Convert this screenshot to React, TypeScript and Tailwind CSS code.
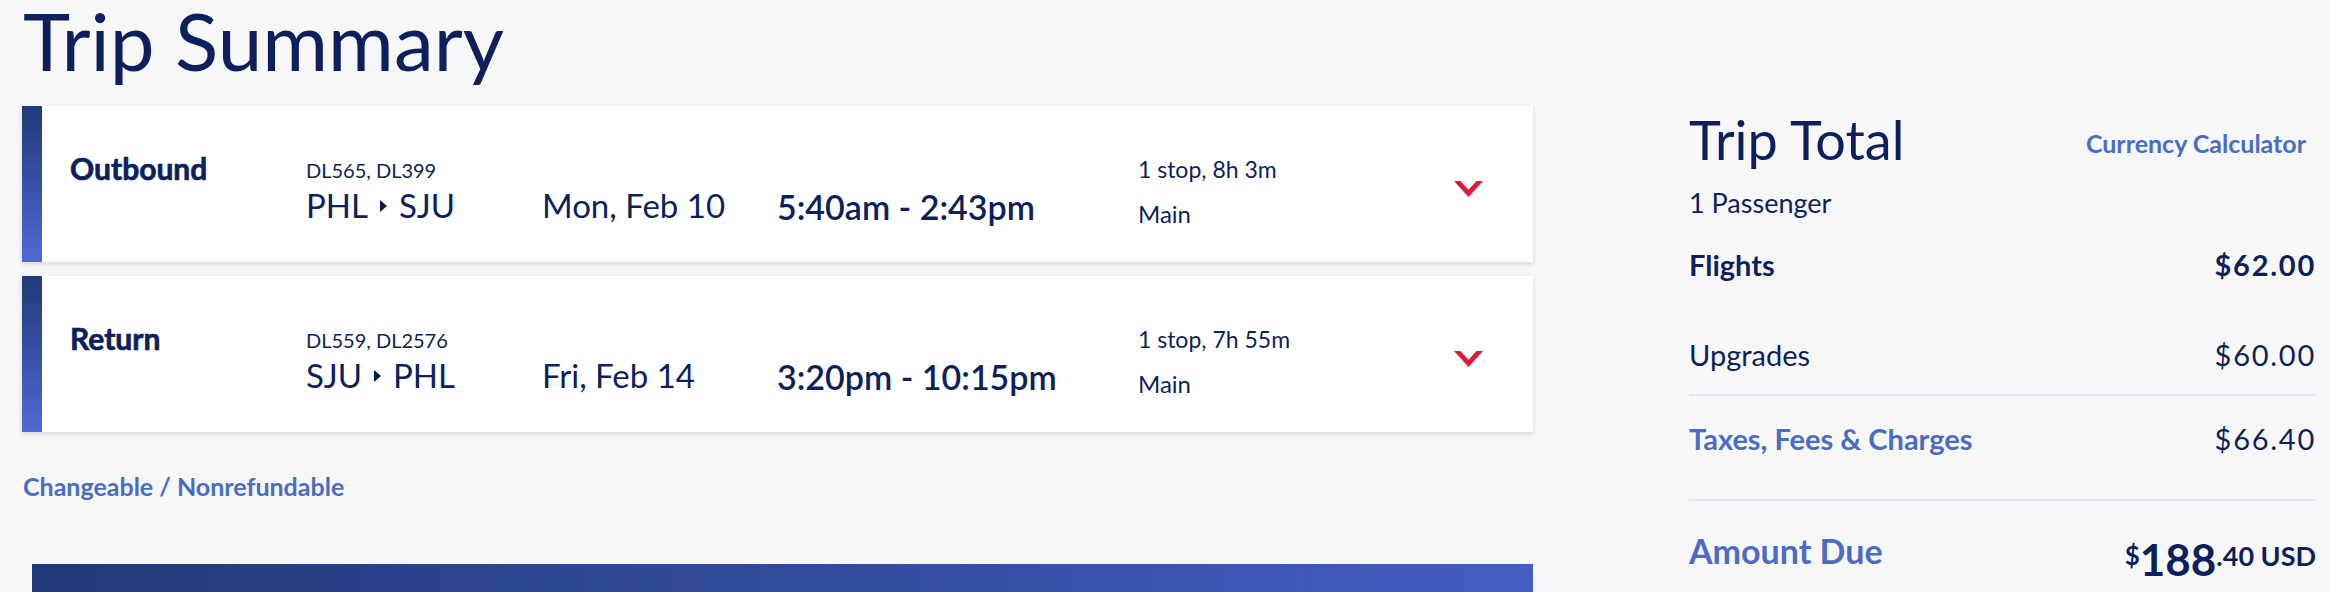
import React from "react";

type Leg = {
  label: string;
  flights: string;
  from: string;
  to: string;
  date: string;
  times: string;
  stops: string;
  cabin: string;
};

const legs: Leg[] = [
  {
    label: "Outbound",
    flights: "DL565, DL399",
    from: "PHL",
    to: "SJU",
    date: "Mon, Feb 10",
    times: "5:40am - 2:43pm",
    stops: "1 stop, 8h 3m",
    cabin: "Main",
  },
  {
    label: "Return",
    flights: "DL559, DL2576",
    from: "SJU",
    to: "PHL",
    date: "Fri, Feb 14",
    times: "3:20pm - 10:15pm",
    stops: "1 stop, 7h 55m",
    cabin: "Main",
  },
];

function Chevron() {
  return (
    <svg width="29" height="16" viewBox="0 0 29 16" aria-hidden="true">
      <polygon points="0,0 6.5,0 14.5,8.8 22.5,0 29,0 14.5,16" fill="#e31837" />
    </svg>
  );
}

function LegCard({ leg }: { leg: Leg }) {
  return (
    <div className="flex h-[156px] bg-white shadow-[0_2px_5px_rgba(0,0,0,0.13)]">
      {/* accent bar */}
      <div className="w-[20px] shrink-0 bg-gradient-to-b from-[#213a78] to-[#5068d6]" />
      <div className="flex items-start pl-[28px]">
        <div className="w-[236px] pt-[47px] text-[30px] leading-[30px] font-bold [-webkit-text-stroke:0.7px_currentColor]">
          {leg.label}
        </div>
        <div className="w-[236px] pt-[54px]">
          <div className="text-[20px] leading-[20px]">{leg.flights}</div>
          <div className="mt-[9px] flex items-center text-[33px] leading-[33px]">
            <span>{leg.from}</span>
            <svg width="7" height="12" viewBox="0 0 7 12" className="mx-[12px]" aria-hidden="true">
              <polygon points="0,0 7,6 0,12" fill="#0b1a3f" />
            </svg>
            <span>{leg.to}</span>
          </div>
        </div>
        <div className="w-[235px] pt-[83px] text-[33px] leading-[33px]">{leg.date}</div>
        <div className="w-[361px] pt-[84px] text-[34px] leading-[34px] font-semibold">
          {leg.times}
        </div>
        <div className="w-[316px] pt-[52px]">
          <div className="text-[23px] leading-[23px]">{leg.stops}</div>
          <div className="mt-[21px] text-[24px] leading-[24px]">{leg.cabin}</div>
        </div>
        <div className="pt-[75px]">
          <Chevron />
        </div>
      </div>
    </div>
  );
}

export default function App() {
  return (
    <div className="h-[592px] overflow-hidden bg-[#f7f7f7] font-['Lato','Open_Sans',sans-serif] text-[#0e1f5e]">
      <h1 className="h-[106px] pl-[23px] text-[80px] leading-[80px]">Trip Summary</h1>

      <div className="flex pl-[22px] pr-[14px]">
        {/* left: legs */}
        <div className="w-[1511px] shrink-0">
          <div className="flex flex-col gap-[14px]">
            {legs.map((leg) => (
              <LegCard key={leg.label} leg={leg} />
            ))}
          </div>
          <div className="mt-[42px] pl-px text-[25px] leading-[25px] font-bold text-[#4a6cc6]">
            Changeable / Nonrefundable
          </div>
          <div className="ml-[10px] mt-[65px] h-[60px] bg-gradient-to-r from-[#1f3a78] to-[#445dc2]" />
        </div>

        {/* right: trip total */}
        <div className="ml-[156px] w-[627px] shrink-0">
          <div className="flex items-start justify-between">
            <div className="mt-[7px] text-[54px] leading-[54px]">Trip Total</div>
            <div className="mt-[25px] pr-[10px] text-[25px] leading-[25px] font-bold text-[#4a6cc6]">
              Currency Calculator
            </div>
          </div>
          <div className="mt-[22px] text-[27px] leading-[27px]">1 Passenger</div>

          <div className="mt-[18px] flex h-[60px] items-center justify-between text-[29px] leading-[29px] font-bold">
            <span>Flights</span>
            <span className="tracking-[0.06em]">$62.00</span>
          </div>
          <div className="flex h-[102px] items-center justify-between border-b-2 border-[#e4e8f0] pt-[20px] text-[29px] leading-[29px]">
            <span>Upgrades</span>
            <span className="tracking-[0.06em]">$60.00</span>
          </div>
          <div className="flex h-[105px] items-center justify-between border-b-2 border-[#e4e8f0] pb-[19px] text-[29px] leading-[29px]">
            <span className="font-bold text-[#4a6cc6]">Taxes, Fees &amp; Charges</span>
            <span className="tracking-[0.06em]">$66.40</span>
          </div>
          <div className="flex items-start justify-between">
            <div className="mt-[33px] text-[34px] leading-[34px] font-bold text-[#4a6cc6]">Amount Due</div>
            <div className="flex items-start font-bold">
              <span className="mt-[41px] text-[26px] leading-[26px]">$</span>
              <span className="mt-[36px] text-[44px] leading-[44px]">188</span>
              <span className="mt-[41px] text-[27px] leading-[27px]">.40 USD</span>
            </div>
          </div>
        </div>
      </div>
    </div>
  );
}
